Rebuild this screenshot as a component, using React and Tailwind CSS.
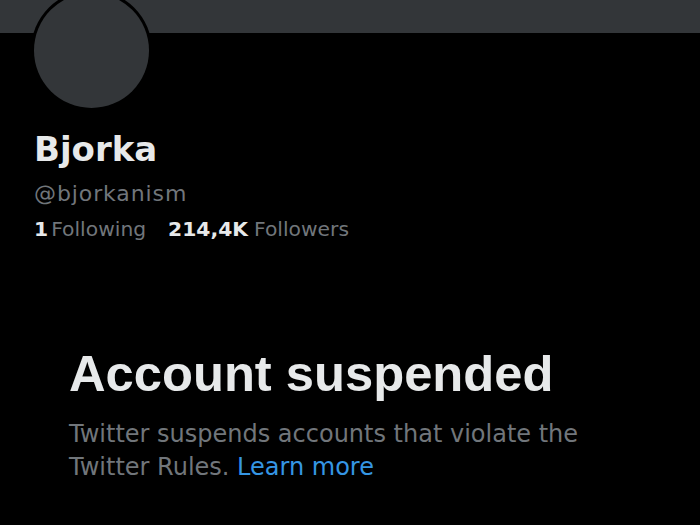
import React from 'react';

// Suspended profile page, dark theme

const Avatar = () => (
  <div className="absolute left-[31px] top-[-10px] w-[121px] h-[121px] rounded-full bg-black p-[3px]">
    <div className="w-full h-full rounded-full bg-[#333639]" />
  </div>
);

export default function App() {
  return (
    <div className="relative w-[700px] h-[525px] overflow-hidden bg-black font-['DejaVu_Sans',sans-serif]">
      {/* banner */}
      <div className="h-[33px] bg-[#333639]" />
      <Avatar />

      {/* profile info */}
      <div className="pl-[34px] pt-[96px]">
        <div className="text-[34px] leading-[40px] font-bold text-[#e7e9ea]">Bjorka</div>
        <div className="mt-[11px] text-[22px] leading-[28px] tracking-[0.9px] text-[#71767b]">@bjorkanism</div>
        <div className="mt-[9px] flex text-[20.3px] leading-[24px]">
          <span className="font-bold text-[#e7e9ea]">1</span>
          <span className="ml-[3px] text-[#71767b]">Following</span>
          <span className="ml-[22px] font-bold text-[#e7e9ea]">214,4K</span>
          <span className="ml-[6px] text-[#71767b]">Followers</span>
        </div>
      </div>

      {/* suspended notice */}
      <div className="pl-[69px] mt-[105px]">
        <h1 className="font-['Liberation_Sans',Arial,sans-serif] text-[50.7px] leading-[56px] font-bold text-[#e7e9ea]">
          Account suspended
        </h1>
        <p className="mt-[16px] w-[530px] text-[24px] leading-[33.4px] text-[#71767b]">
          Twitter suspends accounts that violate the
          <br />
          Twitter Rules. <span className="text-[#3596e4]">Learn more</span>
        </p>
      </div>
    </div>
  );
}
